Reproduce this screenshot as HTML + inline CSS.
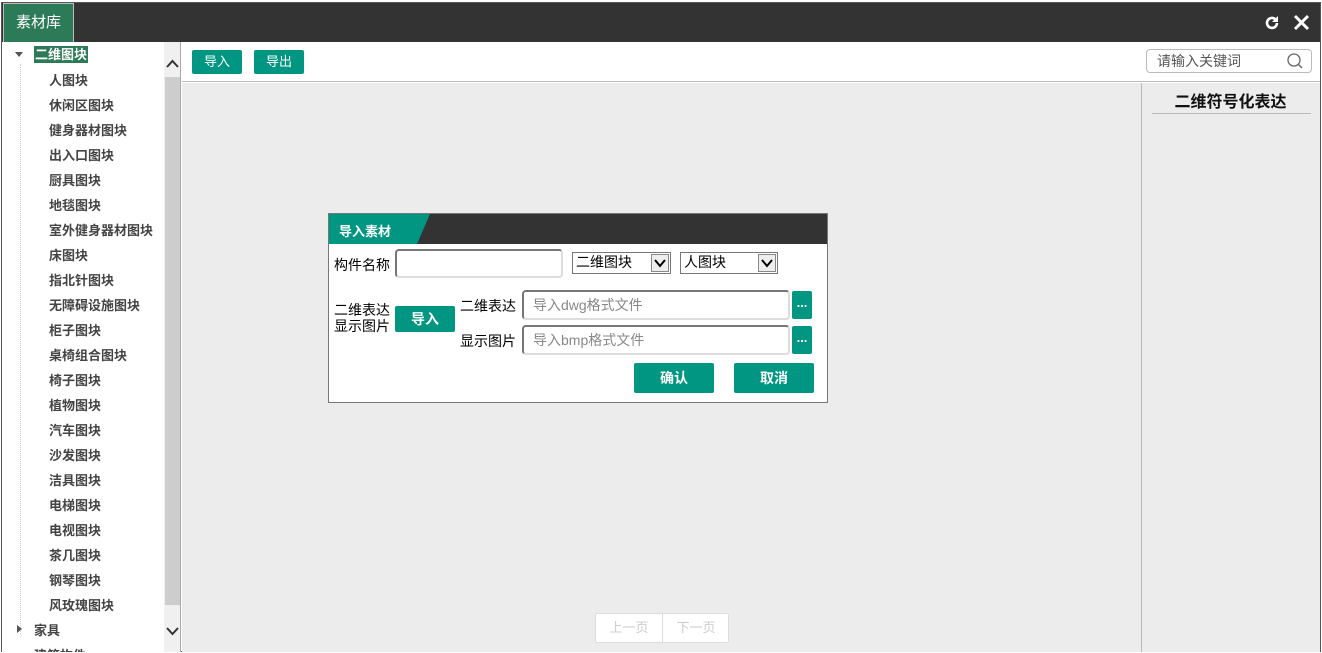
<!DOCTYPE html>
<html><head><meta charset="utf-8"><style>
*{margin:0;padding:0;box-sizing:border-box}
body{width:1322px;height:653px;overflow:hidden;background:#fff;font-family:"Liberation Sans","Noto Sans CJK SC",sans-serif;font-size:13px;color:#333;position:relative}
.abs{position:absolute}
.frame{left:1px;top:2px;width:1320px;height:650px;border:1px solid #555}
.top{left:2px;top:3px;width:1318px;height:39px;background:#333}
.tab{left:3px;top:3px;width:71px;height:39px;background:#2d7a58;color:#fff;font-size:15px;line-height:38px;text-align:center;border:1px solid #bbb;border-bottom:none}
.tree{left:2px;top:42px;width:162px;height:610px;background:#fff;overflow:hidden}
.tree .it{position:absolute;left:47px;font-weight:bold;color:#444;font-size:13px}
.sb{left:164px;top:42px;width:17px;height:610px;background:#f0f0f0;border-right:1px solid #aaa}
.thumb{left:165px;top:77px;width:15px;height:528px;background:#cdcdcd}
.main{left:182px;top:83px;width:959px;height:569px;background:#ececec}
.tool{left:182px;top:42px;width:1138px;height:40px;background:#fff;border-bottom:1px solid #bbb}
.btn{background:#009682;color:#fff;text-align:center;border-radius:2px}
.right{left:1141px;top:83px;width:179px;height:569px;background:#ececec;border-left:1px solid #bbb}
.dlg{left:328px;top:213px;width:500px;height:190px;background:#fff;border:1px solid #777}
.inp{border:2px solid #777;border-right-color:#ddd;border-bottom-color:#ddd;border-radius:4px;background:#fff;color:#888;font-size:14px;padding-left:9px}
.sel{border:1px solid #777;background:#fff;font-size:14px;color:#000;padding-left:3px;line-height:19px}
.sel span{position:absolute;right:1px;top:1px;width:18px;height:18px;background:#eee;border:1px solid #888}
</style></head><body>
<div class="abs frame"></div>
<div class="abs top"></div>
<div class="abs tab">素材库</div>
<svg class="abs" style="left:1263px;top:14px" width="18" height="18" viewBox="0 0 18 18"><path d="M14 9a5 5 0 1 1-1.5-3.6" stroke="#fff" stroke-width="2.6" fill="none"/><path d="M15 2v6h-6z" fill="#fff"/></svg>
<svg class="abs" style="left:1293px;top:14px" width="17" height="17" viewBox="0 0 17 17"><path d="M2 2L15 15M15 2L2 15" stroke="#fff" stroke-width="3"/></svg>

<div class="abs tree">
<div class="abs" style="left:18px;top:22px;height:570px;border-left:1px dotted #ccc"></div>
<div class="abs" style="left:13px;top:10px;width:0;height:0;border-left:4px solid transparent;border-right:4px solid transparent;border-top:5px solid #555"></div>
<div class="abs" style="left:32px;top:4px;background:#2d7a58;color:#fff;font-weight:bold;padding:0 1px;line-height:17px">二维图块</div>
<div class="it" style="top:28px">人图块</div>
<div class="it" style="top:53px">休闲区图块</div>
<div class="it" style="top:78px">健身器材图块</div>
<div class="it" style="top:103px">出入口图块</div>
<div class="it" style="top:128px">厨具图块</div>
<div class="it" style="top:153px">地毯图块</div>
<div class="it" style="top:178px">室外健身器材图块</div>
<div class="it" style="top:203px">床图块</div>
<div class="it" style="top:228px">指北针图块</div>
<div class="it" style="top:253px">无障碍设施图块</div>
<div class="it" style="top:278px">柜子图块</div>
<div class="it" style="top:303px">桌椅组合图块</div>
<div class="it" style="top:328px">椅子图块</div>
<div class="it" style="top:353px">植物图块</div>
<div class="it" style="top:378px">汽车图块</div>
<div class="it" style="top:403px">沙发图块</div>
<div class="it" style="top:428px">洁具图块</div>
<div class="it" style="top:453px">电梯图块</div>
<div class="it" style="top:478px">电视图块</div>
<div class="it" style="top:503px">茶几图块</div>
<div class="it" style="top:528px">钢琴图块</div>
<div class="it" style="top:553px">风玫瑰图块</div>
<div class="abs" style="left:15px;top:583px;width:0;height:0;border-top:4px solid transparent;border-bottom:4px solid transparent;border-left:5px solid #555"></div>
<div class="it" style="top:578px;left:32px">家具</div>
<div class="it" style="top:603px;left:32px">建筑构件</div>
</div>
<div class="abs sb"></div>
<div class="abs thumb"></div>
<svg class="abs" style="left:166px;top:59px" width="13" height="10"><path d="M1 8L6.5 2L12 8" stroke="#333" stroke-width="2" fill="none"/></svg>
<svg class="abs" style="left:166px;top:626px" width="13" height="10"><path d="M1 2L6.5 8L12 2" stroke="#333" stroke-width="2" fill="none"/></svg>

<div class="abs tool"></div>
<div class="abs btn" style="left:192px;top:50px;width:50px;height:24px;line-height:24px;font-size:13px">导入</div>
<div class="abs btn" style="left:254px;top:50px;width:50px;height:24px;line-height:24px;font-size:13px">导出</div>
<div class="abs" style="left:1146px;top:49px;width:166px;height:24px;border:1px solid #bbb;border-radius:4px;color:#555;font-size:14px;line-height:22px;padding-left:10px">请输入关键词</div>
<svg class="abs" style="left:1286px;top:52px" width="18" height="18"><circle cx="8" cy="8" r="6" stroke="#666" stroke-width="1.3" fill="none"/><path d="M12.5 12.5L16 16" stroke="#666" stroke-width="1.5"/></svg>

<div class="abs main"></div>
<div class="abs right"></div>
<div class="abs" style="left:1141px;top:88px;width:179px;text-align:center;font-weight:bold;font-size:16px;color:#111">二维符号化表达</div>
<div class="abs" style="left:1152px;top:113px;width:159px;border-top:1px solid #bbb"></div>

<div class="abs" style="left:595px;top:613px;width:134px;height:30px;background:#fff;border:1px solid #ddd;border-radius:2px;color:#ccc;font-size:13px;line-height:28px">
<span style="position:absolute;left:0;width:66px;text-align:center">上一页</span><span style="position:absolute;left:66px;top:0;height:28px;border-left:1px solid #ddd"></span><span style="position:absolute;left:67px;width:66px;text-align:center">下一页</span></div>

<div class="abs dlg">
<div class="abs" style="left:0;top:0;width:498px;height:30px;background:#333"></div>
<svg class="abs" style="left:0;top:0" width="102" height="30"><path d="M0 0H101L88 30H0Z" fill="#009682"/></svg>
<div class="abs" style="left:10px;top:7px;color:#fff;font-weight:bold;font-size:13px">导入素材</div>
<div class="abs" style="left:5px;top:41px;font-size:14px;color:#000">构件名称</div>
<div class="abs inp" style="left:66px;top:35px;width:168px;height:29px"></div>
<div class="abs sel" style="left:243px;top:38px;width:99px;height:22px">二维图块<span><svg width="16" height="16"><path d="M3 5L8 11L13 5" stroke="#000" stroke-width="2" fill="none"/></svg></span></div>
<div class="abs sel" style="left:351px;top:38px;width:98px;height:22px">人图块<span><svg width="16" height="16"><path d="M3 5L8 11L13 5" stroke="#000" stroke-width="2" fill="none"/></svg></span></div>
<div class="abs" style="left:5px;top:88px;font-size:14px;color:#000;line-height:16px">二维表达<br>显示图片</div>
<div class="abs btn" style="left:66px;top:92px;width:60px;height:26px;line-height:26px;font-weight:bold;font-size:14px">导入</div>
<div class="abs" style="left:131px;top:82px;font-size:14px;color:#000">二维表达</div>
<div class="abs inp" style="left:193px;top:76px;width:268px;height:30px;line-height:26px">导入dwg格式文件</div>
<div class="abs btn" style="left:463px;top:77px;width:20px;height:28px;line-height:24px;font-weight:bold">...</div>
<div class="abs" style="left:131px;top:117px;font-size:14px;color:#000">显示图片</div>
<div class="abs inp" style="left:193px;top:111px;width:268px;height:30px;line-height:26px">导入bmp格式文件</div>
<div class="abs btn" style="left:463px;top:112px;width:20px;height:28px;line-height:24px;font-weight:bold">...</div>
<div class="abs btn" style="left:305px;top:149px;width:80px;height:30px;line-height:30px;font-weight:bold;font-size:14px">确认</div>
<div class="abs btn" style="left:405px;top:149px;width:80px;height:30px;line-height:30px;font-weight:bold;font-size:14px">取消</div>
</div>
</body></html>
